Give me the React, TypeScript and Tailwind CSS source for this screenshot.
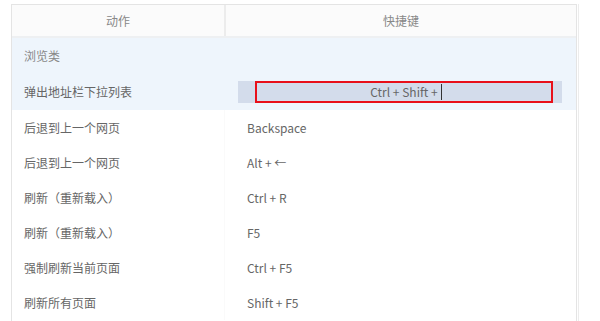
import React from "react";

const rows: [string, string][] = [
  ["后退到上一个网页", "Backspace"],
  ["后退到上一个网页", "Alt + ←"],
  ["刷新（重新载入）", "Ctrl + R"],
  ["刷新（重新载入）", "F5"],
  ["强制刷新当前页面", "Ctrl + F5"],
  ["刷新所有页面", "Shift + F5"],
];

export default function App() {
  return (
    <div
      className="w-[600px] h-[321px] overflow-hidden bg-white pt-[4px] pl-[11px]"
      style={{ fontFamily: '"Noto Sans CJK SC", "Liberation Sans", sans-serif' }}
    >
      <div className="w-[568px] flex">
        <div className="w-[566px] border-l border-t border-r border-[#e4e4e4] text-[12px] text-[#666]">
          <div className="flex h-[33px] bg-[#fbfbfb] border-b-2 border-[#eef0f2] text-[#888]">
            <div className="w-[214px] flex items-center justify-center border-r-2 border-[#ececec]">动作</div>
            <div className="flex-1 flex items-center justify-center">快捷键</div>
          </div>
          <div className="h-[36px] bg-[#eef5fc] flex items-center pl-[12px] text-[#888]">浏览类</div>
          <div className="h-[36px] bg-[#eef5fc] flex items-center">
            <div className="w-[214px] pl-[12px]">弹出地址栏下拉列表</div>
            <div className="ml-[12px] w-[324px] h-[22px] bg-[#d3dceb] relative">
              <div className="absolute left-[17px] top-0 w-[298px] h-[22px] border-2 border-[#e8101a] flex items-center justify-center">
                <span className="pl-[8px]">Ctrl + Shift +</span>
                <span className="ml-[3px] w-px h-[16px] bg-[#333]" />
                <span className="w-[4px]" />
              </div>
            </div>
          </div>
          {rows.map(([a, b], i) => (
            <div key={i} className="h-[35px] flex items-center bg-white">
              <div className="w-[213px] pl-[12px] h-full flex items-center border-r border-[#fafafa]">{a}</div>
              <div className="pl-[22px]">{b}</div>
            </div>
          ))}
        </div>
        <div className="ml-[1px] w-px h-[330px] bg-[#ececec]" />
      </div>
    </div>
  );
}
